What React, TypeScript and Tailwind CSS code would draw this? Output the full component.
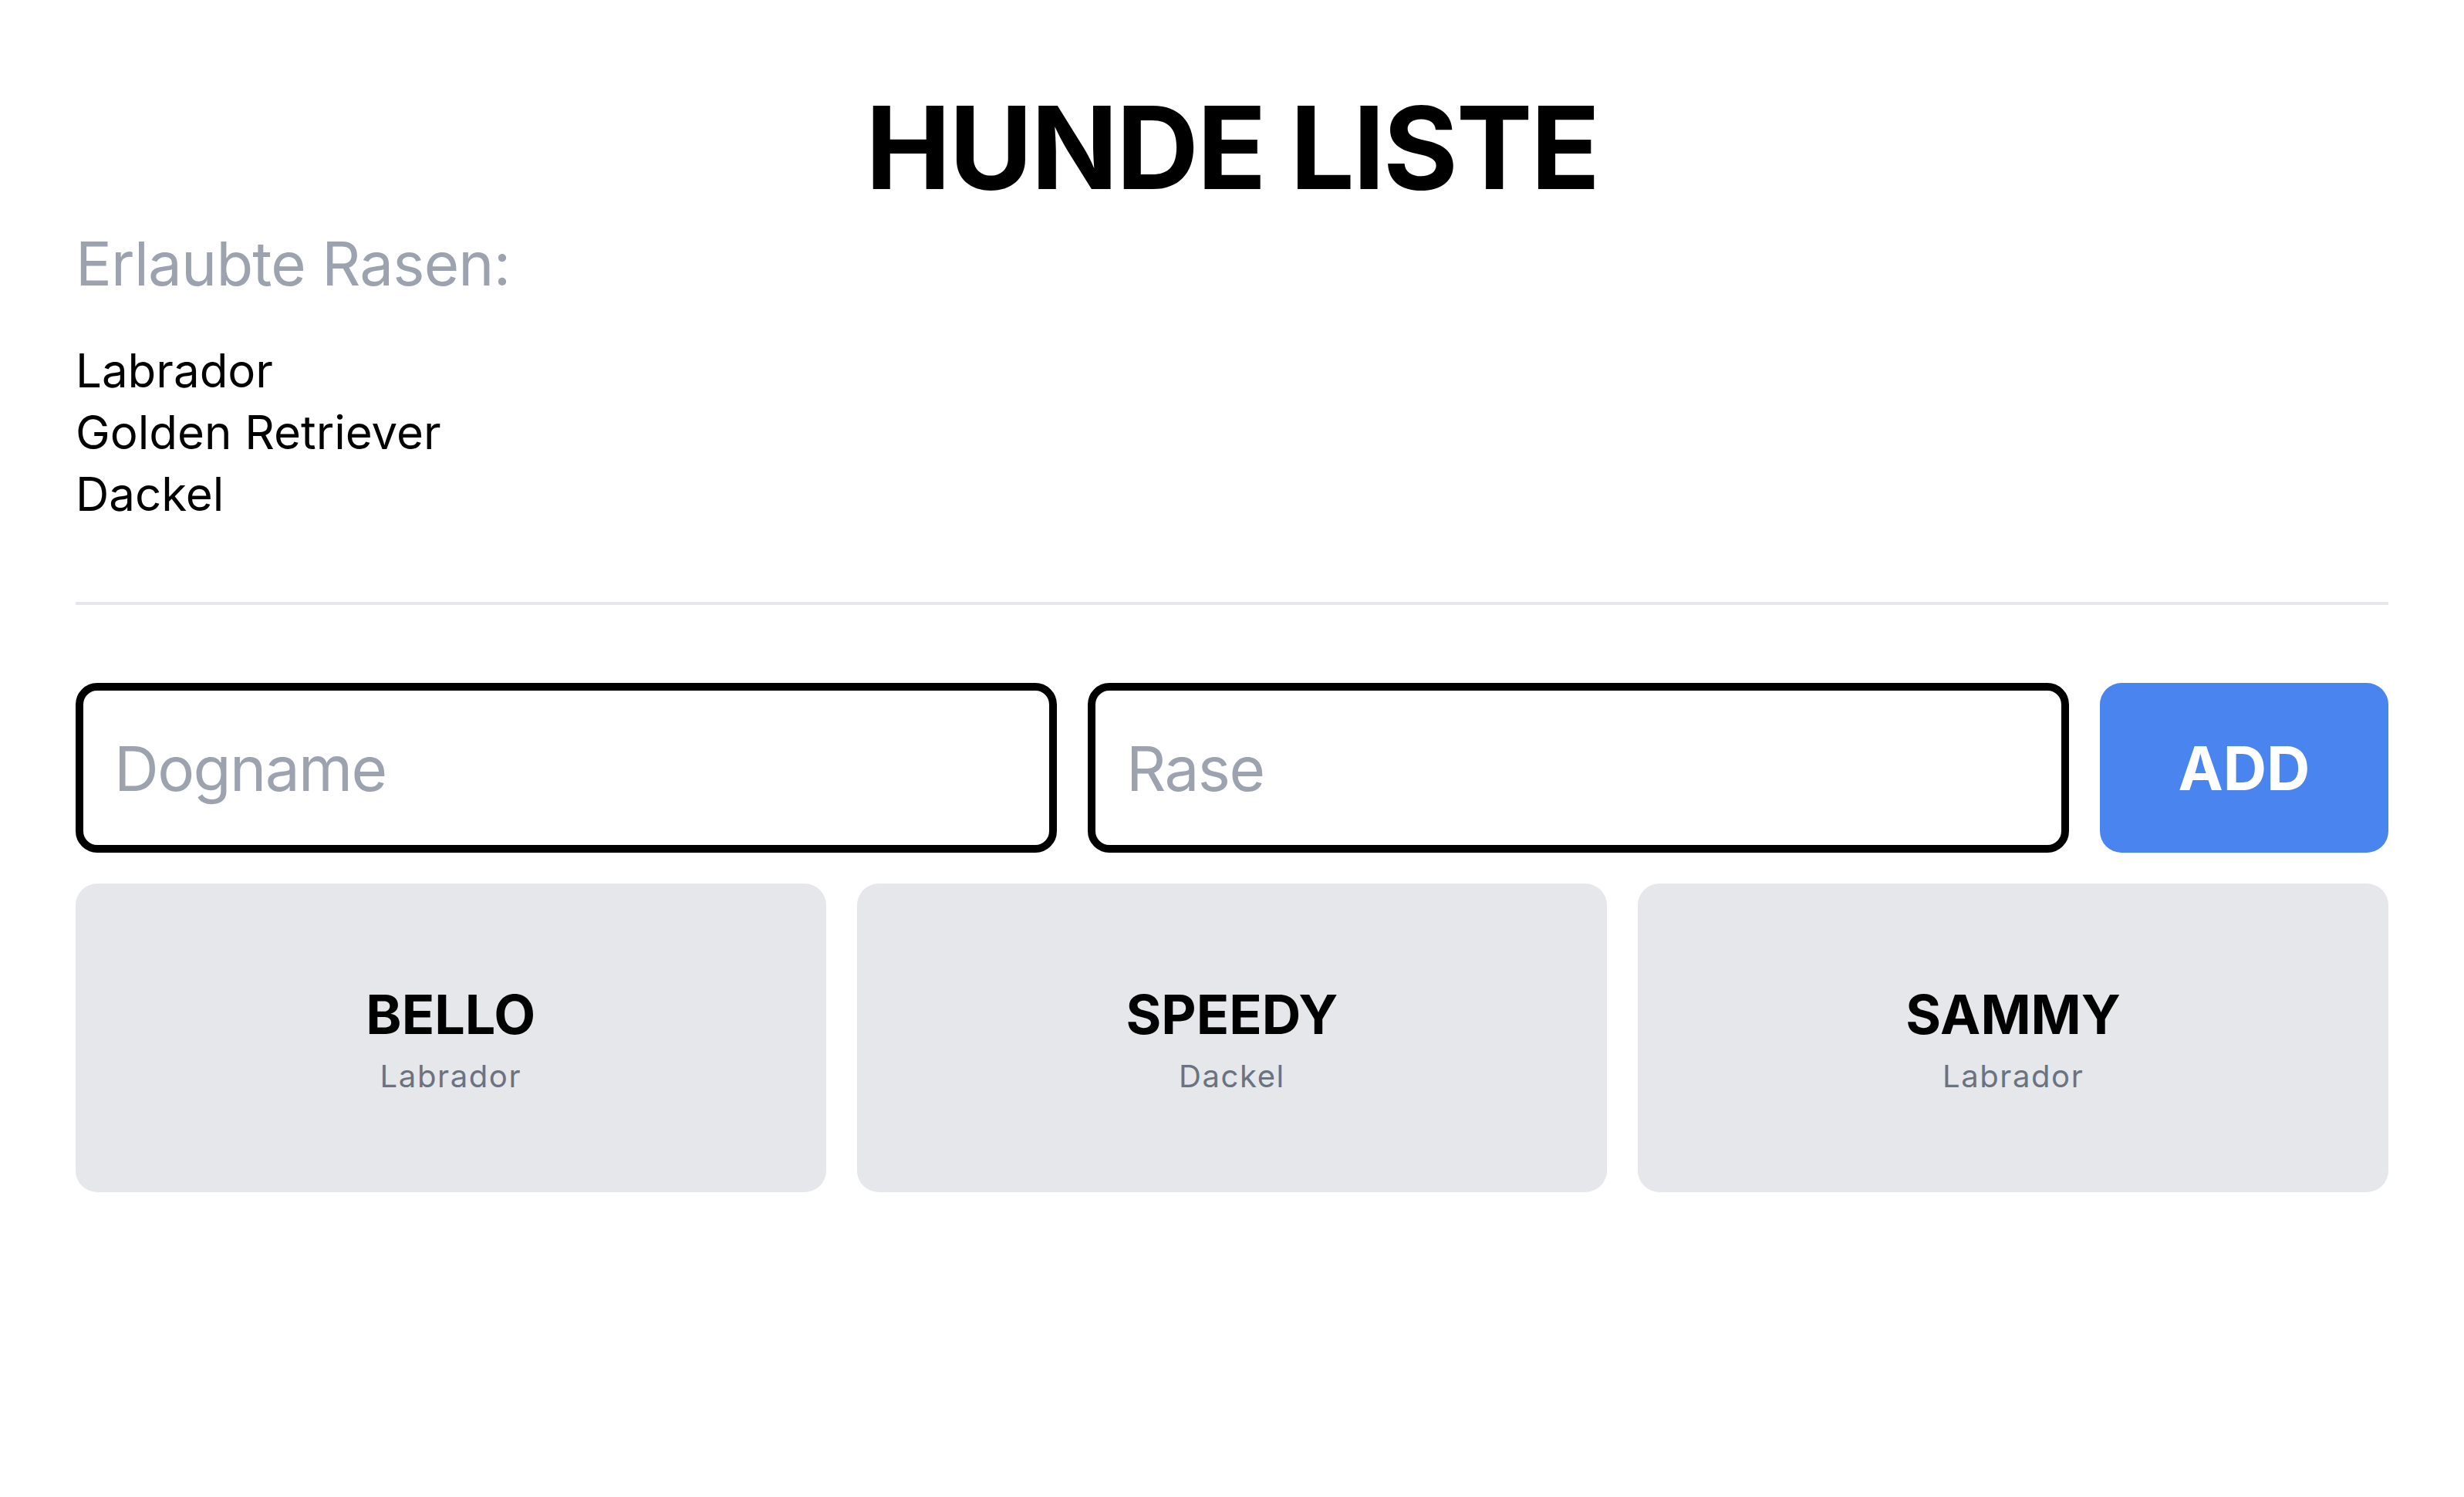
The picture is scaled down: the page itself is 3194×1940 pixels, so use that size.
import { useState } from 'react';

type Dog = { name: string; breed: string };

const allowedBreeds = ['Labrador', 'Golden Retriever', 'Dackel'];

const initialDogs: Dog[] = [
  { name: 'Bello', breed: 'Labrador' },
  { name: 'Speedy', breed: 'Dackel' },
  { name: 'Sammy', breed: 'Labrador' },
];

export default function App() {
  const [dogs, setDogs] = useState<Dog[]>(initialDogs);
  const [name, setName] = useState('');
  const [breed, setBreed] = useState('');

  const addDog = () => {
    if (!name.trim() || !allowedBreeds.includes(breed.trim())) return;
    setDogs([...dogs, { name: name.trim(), breed: breed.trim() }]);
    setName('');
    setBreed('');
  };

  return (
    <div className="min-h-screen bg-white font-['Inter',sans-serif] text-black">
      <main className="px-[98px] pt-[118px] pb-[96px]">
        <h1 className="text-center text-[148px] leading-[148px] font-bold tracking-[-0.015em]">
          HUNDE LISTE
        </h1>

        {/* Allowed breeds */}
        <h2 className="mt-[37px] text-[78px] leading-[78px] tracking-[-0.01em] text-[#9ca3af]">Erlaubte Rasen:</h2>
        <ul className="mt-[59px] text-[60px] leading-[80px]">
          {allowedBreeds.map(b => (
            <li key={b}>{b}</li>
          ))}
        </ul>

        <div className="mt-[100px] h-[4px] bg-[#e5e7eb]" />

        {/* Form */}
        <div className="mt-[101px] flex gap-[40px]">
          <input
            value={name}
            onChange={e => setName(e.target.value)}
            placeholder="Dogname"
            className="h-[220px] flex-1 min-w-0 rounded-[28px] border-[10px] border-black px-[40px] text-[80px] tracking-[-0.02em] outline-none placeholder:text-[#9ca3af]"
          />
          <input
            value={breed}
            onChange={e => setBreed(e.target.value)}
            placeholder="Rase"
            className="h-[220px] flex-1 min-w-0 rounded-[28px] border-[10px] border-black px-[40px] text-[80px] tracking-[-0.02em] outline-none placeholder:text-[#9ca3af]"
          />
          <button
            onClick={addDog}
            className="h-[220px] w-[374px] shrink-0 rounded-[28px] bg-[#4a84ef] text-[78px] font-bold text-white"
          >
            ADD
          </button>
        </div>

        {/* Dog cards */}
        <div className="mt-[40px] grid grid-cols-3 gap-[40px]">
          {dogs.map((dog, i) => (
            <div
              key={i}
              className="flex h-[400px] flex-col items-center justify-center rounded-[28px] bg-[#e5e7eb] pt-[8px]"
            >
              <p className="text-[70px] leading-[80px] font-bold uppercase">{dog.name}</p>
              <p className="mt-[12px] text-[40px] leading-[56px] tracking-[0.04em] text-[#6b7280]">{dog.breed}</p>
            </div>
          ))}
        </div>
      </main>
    </div>
  );
}
